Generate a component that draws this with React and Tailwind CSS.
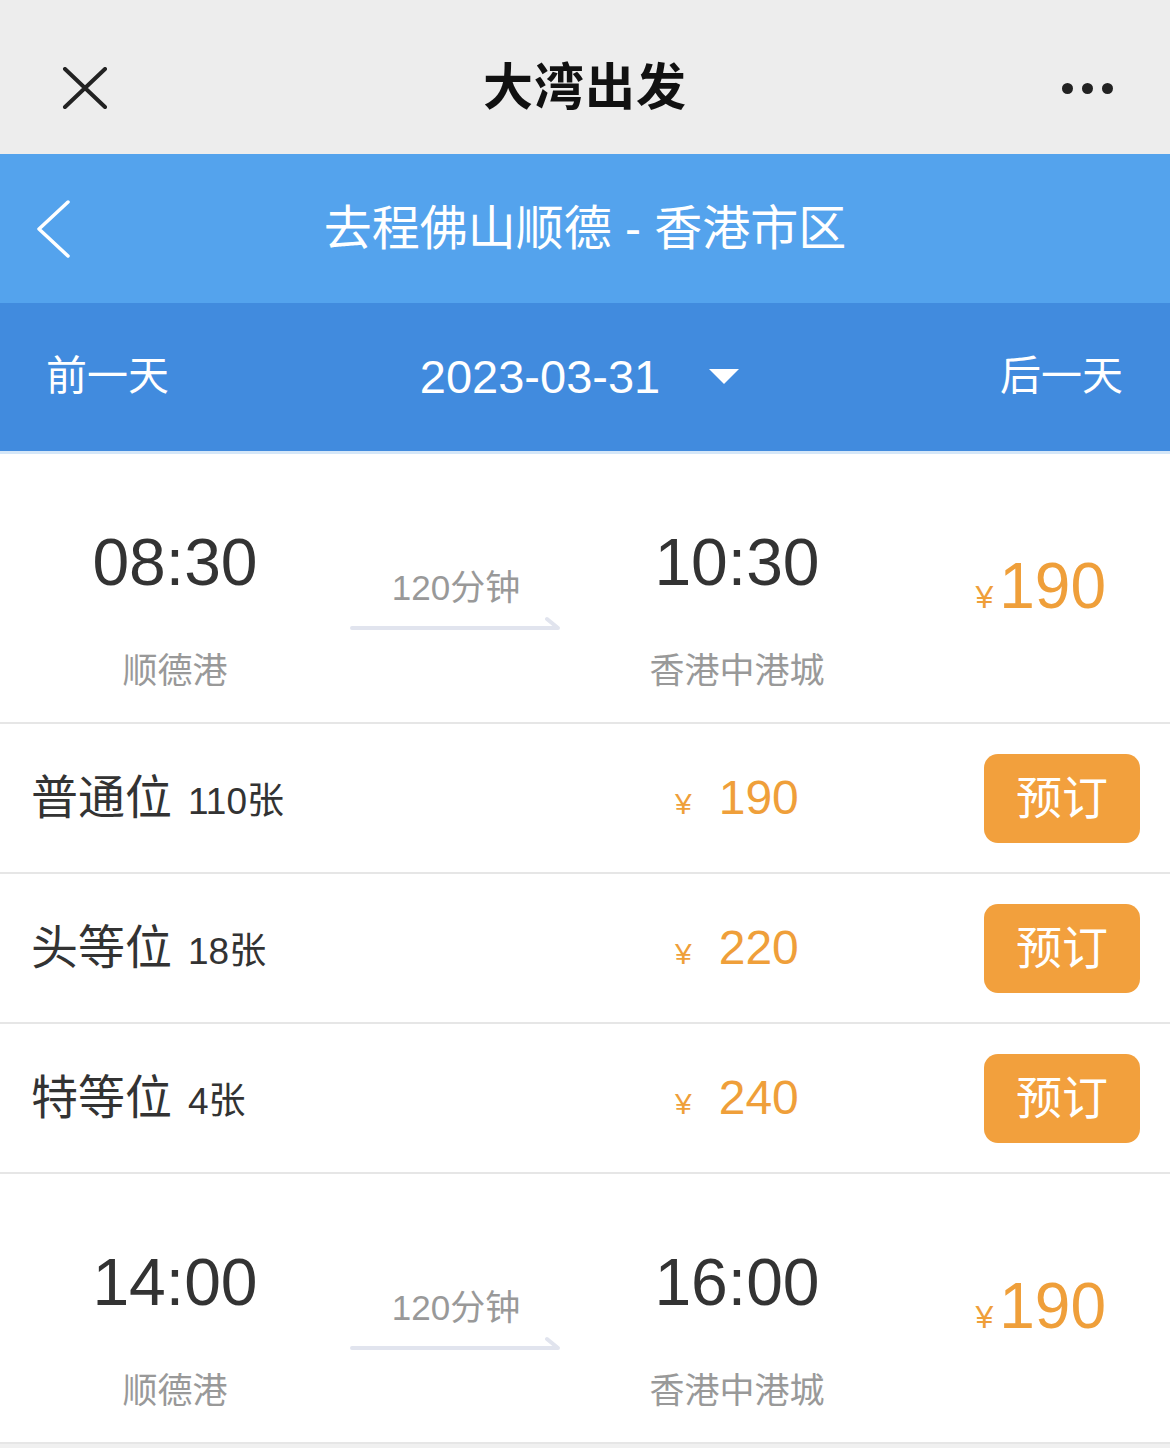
import React from 'react';

const font = { fontFamily: '"Liberation Sans", "Noto Sans CJK SC", sans-serif' };

const trips = [
    {
        depart: '08:30',
        arrive: '10:30',
        from: '顺德港',
        to: '香港中港城',
        duration: '120分钟',
        price: 190,
        seats: [
            { name: '普通位', left: '110张', price: 190 },
            { name: '头等位', left: '18张', price: 220 },
            { name: '特等位', left: '4张', price: 240 },
        ],
    },
    {
        depart: '14:00',
        arrive: '16:00',
        from: '顺德港',
        to: '香港中港城',
        duration: '120分钟',
        price: 190,
        seats: [],
    },
];

const HalfArrow = () => (
    <svg width="212" height="16" viewBox="0 0 212 16" fill="none">
        <path d="M2 12 H208 L197 3" stroke="#e1e4ee" strokeWidth="4" strokeLinecap="round" strokeLinejoin="round" />
    </svg>
);

const TripCard = ({ trip }) => (
    <div className="flex h-[270px] border-b-2 border-[#e6e6e6] bg-white">
        <div className="w-[350px] flex flex-col items-center pt-[75px]">
            <div className="text-[66px] leading-none text-[#333]">{trip.depart}</div>
            <div className="mt-[58px] text-[35px] leading-none text-[#999]">{trip.from}</div>
        </div>
        <div className="w-[212px] flex flex-col items-center pt-[116px]">
            <div className="text-[35px] leading-none text-[#999]">{trip.duration}</div>
            <div className="mt-[11px]">
                <HalfArrow />
            </div>
        </div>
        <div className="w-[350px] flex flex-col items-center pt-[75px]">
            <div className="text-[66px] leading-none text-[#333]">{trip.arrive}</div>
            <div className="mt-[58px] text-[35px] leading-none text-[#999]">{trip.to}</div>
        </div>
        <div className="flex-1 flex items-baseline justify-end pr-[64px] pt-[100px] text-[#ef9f3a]">
            <span className="text-[32px] mr-[6px]">¥</span>
            <span className="text-[64px] leading-none">{trip.price}</span>
        </div>
    </div>
);

const SeatRow = ({ seat }) => (
    <div className="flex items-center h-[150px] border-b-2 border-[#e6e6e6] bg-white pl-[31px] pr-[30px]">
        <div className="w-[644px] flex items-baseline">
            <span className="text-[47px] text-[#333]">{seat.name}</span>
            <span className="ml-[16px] text-[37px] text-[#333]">{seat.left}</span>
        </div>
        <div className="flex-1 flex items-baseline text-[#ef9f3a]">
            <span className="text-[30px]">¥</span>
            <span className="ml-[27px] text-[48px]">{seat.price}</span>
        </div>
        <button className="w-[156px] h-[89px] rounded-[14px] bg-[#f2a03d] text-white text-[46px] leading-none">
            预订
        </button>
    </div>
);

const App = () => {
    return (
        <div className="w-[1170px] min-h-[1448px] bg-white" style={font}>
            {/* 微信顶栏 */}
            <div className="h-[154px] bg-[#ededed] flex items-center justify-between pt-[22px] pl-[62px] pr-[56px]">
                <svg width="46" height="42" viewBox="0 0 46 42">
                    <path d="M3 2 L43 40 M43 2 L3 40" stroke="#222" strokeWidth="4" strokeLinecap="round" />
                </svg>
                <div className="text-[50px] font-bold text-[#111] tracking-[1px]">大湾出发</div>
                <div className="flex gap-[9px] w-[52px]">
                    <span className="w-[11px] h-[11px] rounded-full bg-[#222]" />
                    <span className="w-[11px] h-[11px] rounded-full bg-[#222]" />
                    <span className="w-[11px] h-[11px] rounded-full bg-[#222]" />
                </div>
            </div>

            {/* 标题栏 */}
            <div className="h-[149px] bg-[#54a3ed] flex items-center relative">
                <svg className="absolute left-[36px] top-[46px]" width="36" height="60" viewBox="0 0 36 60">
                    <path d="M32 2 L3 29 L32 56" stroke="#fff" strokeWidth="3.5" fill="none" strokeLinecap="round" strokeLinejoin="round" />
                </svg>
                <div className="w-full text-center text-white text-[48px]">去程佛山顺德 - 香港市区</div>
            </div>

            {/* 日期栏 */}
            <div className="h-[151px] bg-[#418bde] border-b-[3px] border-[#d5e7f8] flex items-center justify-between pl-[46px] pr-[47px]">
                <span className="w-[200px] text-[41px] text-white">前一天</span>
                <div className="flex items-center mr-[10px]">
                    <span className="text-[47px] text-white">2023-03-31</span>
                    <svg className="ml-[49px]" width="30" height="16" viewBox="0 0 30 16">
                        <path d="M0 0 H30 L15 15 Z" fill="#fff" />
                    </svg>
                </div>
                <span className="w-[200px] text-right text-[41px] text-white">后一天</span>
            </div>

            {trips.map((trip, i) => (
                <div key={i}>
                    <TripCard trip={trip} />
                    {trip.seats.map((seat) => (
                        <SeatRow key={seat.name} seat={seat} />
                    ))}
                </div>
            ))}
            <div className="h-[6px] bg-[#f0f0f0]" />
        </div>
    );
};

export default App;
